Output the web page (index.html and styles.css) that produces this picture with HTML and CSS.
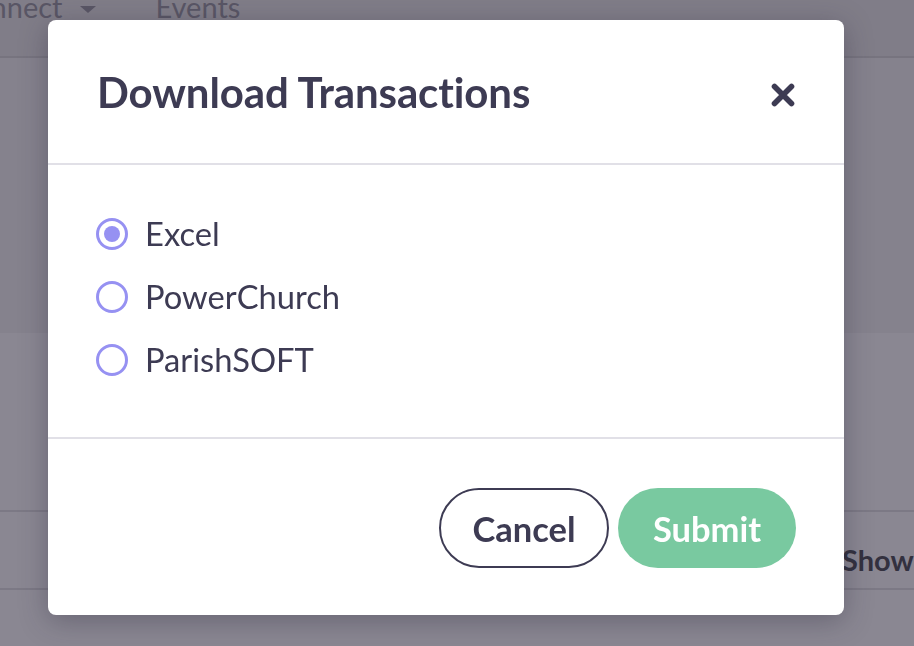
FILE: index.html
```html
<!DOCTYPE html>
<html lang="en">
<head>
<meta charset="utf-8">
<title>Download Transactions</title>
<link rel="stylesheet" href="styles.css">
</head>
<body>
<div class="page">
  <header class="topnav">
    <ul class="nav-list">
      <li class="nav-item nav-connect">Connect<span class="caret"></span></li>
      <li class="nav-item">Events</li>
    </ul>
  </header>
  <section class="hero"></section>
  <section class="band"></section>
  <div class="toolbar"><span class="show">Show</span></div>
  <div class="rest"></div>
</div>

<div class="overlay">
  <div class="modal" role="dialog" aria-labelledby="modal-title">
    <div class="modal-header">
      <h2 id="modal-title" class="modal-title">Download Transactions</h2>
      <button class="close-btn" aria-label="Close">
        <svg width="24" height="24" viewBox="0 0 24 24"><path d="M3.5 3.5 L20.5 20.5 M20.5 3.5 L3.5 20.5" stroke="#3d3b53" stroke-width="5.6" stroke-linecap="round" fill="none"/></svg>
      </button>
    </div>
    <div class="modal-body">
      <label class="radio-row"><span class="radio checked"></span><span class="radio-label">Excel</span></label>
      <label class="radio-row"><span class="radio"></span><span class="radio-label">PowerChurch</span></label>
      <label class="radio-row"><span class="radio"></span><span class="radio-label">ParishSOFT</span></label>
    </div>
    <div class="modal-footer">
      <button class="btn btn-cancel">Cancel</button>
      <button class="btn btn-submit">Submit</button>
    </div>
  </div>
</div>
</body>
</html>
```
FILE: styles.css
```css
* { box-sizing: border-box; }
html, body { margin: 0; padding: 0; }
body {
  width: 914px;
  height: 646px;
  overflow: hidden;
  font-family: "Lato", "Open Sans", sans-serif;
  background: #8a8792;
}
.page { display: flex; flex-direction: column; }
.topnav {
  height: 58px;
  background: #807d88;
  border-bottom: 2px solid #77747f;
  overflow: hidden;
}
.nav-list {
  list-style: none;
  margin: -10px 0 0 -45px;
  padding: 0;
  display: flex;
  gap: 59px;
}
.nav-item {
  font-size: 29px;
  line-height: 34px;
  color: #595665;
  display: flex;
  align-items: center;
}
.caret {
  display: inline-block;
  width: 0; height: 0;
  margin-left: 18px;
  margin-top: 4px;
  border-left: 8px solid transparent;
  border-right: 8px solid transparent;
  border-top: 7px solid #595665;
}
.hero { height: 275px; background: #85828d; }
.band { height: 179px; background: #8a8792; border-bottom: 2px solid #7c7985; }
.toolbar {
  height: 78px;
  background: #8a8792;
  border-bottom: 2px solid #7c7985;
  display: flex;
  align-items: center;
  padding-left: 842px;
  padding-top: 18px;
}
.show { font-size: 29px; font-weight: 700; color: #33313f; }
.rest { flex: 1; background: #8b8893; }

.overlay {
  position: fixed;
  inset: 0;
  display: flex;
  align-items: flex-start;
  padding: 20px 0 0 48px;
}
.modal {
  width: 796px;
  height: 595px;
  background: #fff;
  border-radius: 8px;
  box-shadow: 0 6px 28px rgba(40, 38, 58, 0.35);
  display: flex;
  flex-direction: column;
  color: #3d3b53;
}
.modal-header {
  height: 145px;
  border-bottom: 2px solid #e1e0e7;
  display: flex;
  align-items: center;
  justify-content: space-between;
  padding: 0 49px 0 49px;
}
.modal-title {
  margin: 0;
  font-size: 42px;
  font-weight: 700;
  letter-spacing: -0.1px;
}
.close-btn {
  border: 0;
  background: none;
  padding: 0;
  width: 24px; height: 24px;
  display: flex;
  margin-top: 6px;
}
.modal-body {
  height: 274px;
  border-bottom: 2px solid #e1e0e7;
  padding: 53px 48px 0;
  display: flex;
  flex-direction: column;
  gap: 31px;
}
.radio-row {
  display: flex;
  align-items: center;
  gap: 17px;
  height: 32px;
}
.radio {
  width: 32px; height: 32px;
  border: 3px solid #9691f2;
  border-radius: 50%;
  display: flex;
  align-items: center;
  justify-content: center;
  flex: none;
}
.radio.checked::after {
  content: "";
  width: 16px; height: 16px;
  border-radius: 50%;
  background: #9691f2;
}
.radio-label { font-size: 32.7px; line-height: 32px; color: #3d3b53; }
.modal-footer {
  flex: 1;
  display: flex;
  justify-content: flex-end;
  align-items: flex-start;
  gap: 9px;
  padding: 49px 48px 0;
}
.btn {
  height: 80px;
  border-radius: 40px;
  font-family: inherit;
  font-size: 34.5px;
  font-weight: 700;
  display: flex;
  align-items: center;
  justify-content: center;
}
.btn-cancel {
  width: 170px;
  background: #fff;
  border: 2px solid #3d3b53;
  color: #3d3b53;
}
.btn-submit {
  width: 178px;
  background: #79c9a0;
  border: 0;
  color: #fff;
}
```
